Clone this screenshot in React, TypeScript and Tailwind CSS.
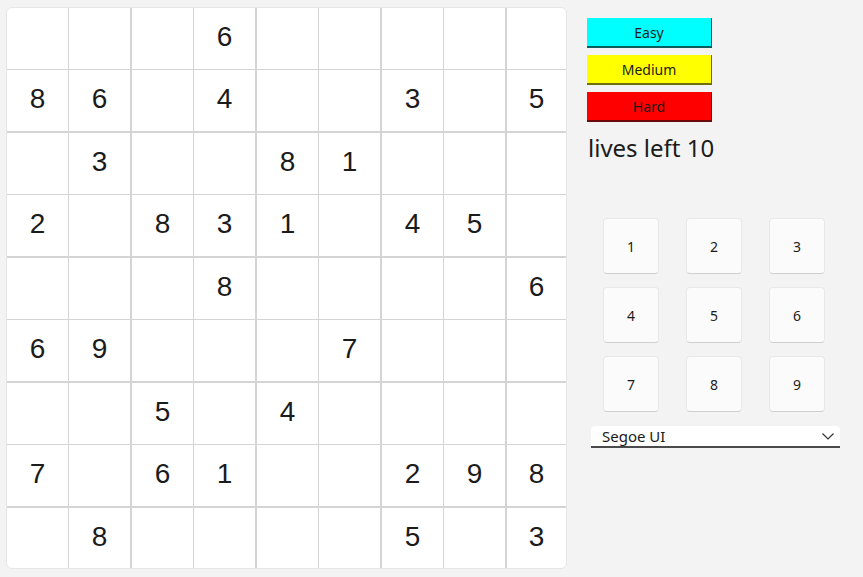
import React from "react";

const board: number[][] = [
  [0, 0, 0, 6, 0, 0, 0, 0, 0],
  [8, 6, 0, 4, 0, 0, 3, 0, 5],
  [0, 3, 0, 0, 8, 1, 0, 0, 0],
  [2, 0, 8, 3, 1, 0, 4, 5, 0],
  [0, 0, 0, 8, 0, 0, 0, 0, 6],
  [6, 9, 0, 0, 0, 7, 0, 0, 0],
  [0, 0, 5, 0, 4, 0, 0, 0, 0],
  [7, 0, 6, 1, 0, 0, 2, 9, 8],
  [0, 8, 0, 0, 0, 0, 5, 0, 3],
];

// lines after odd cells are 1px, after even cells 2px, last cell has none
const rightBorder = (c: number) =>
  c === 8 ? "" : c % 2 === 0 ? "border-r" : "border-r-2";
const bottomBorder = (r: number) =>
  r === 8 ? "" : r % 2 === 0 ? "border-b" : "border-b-2";

const Cell = ({ value, r, c }: { value: number; r: number; c: number }) => (
  <div
    className={`flex items-center justify-center border-[#d4d4d4] ${rightBorder(c)} ${bottomBorder(r)}`}
  >
    <span className="-mt-[3px] text-[28px] leading-none text-[#1b1b1b] font-['Liberation_Sans',Arial,sans-serif]">
      {value ? value : ""}
    </span>
  </div>
);

const LevelButton = ({
  label,
  className,
}: {
  label: string;
  className: string;
}) => (
  <button
    className={`h-[30px] w-[125px] border-r border-b-2 text-[14px] text-[#1b1b1b] ${className}`}
  >
    {label}
  </button>
);

const PadButton = ({ n }: { n: number }) => (
  <button className="flex h-[56px] w-[56px] items-center justify-center rounded-[4px] border border-[#e8e8e8] border-b-[#cfcfcf] bg-[#fbfbfb] text-[14px] text-[#1b1b1b]">
    {n}
  </button>
);

export default function App() {
  return (
    <div className="flex h-[577px] w-[863px] bg-[#f3f3f3] font-['Segoe_UI','Noto_Sans',sans-serif]">
      <div className="pl-[6px] pt-[7px]">
        <div className="overflow-hidden rounded-[6px] border border-[#e6e6e6] bg-white">
          <div className="grid grid-cols-[62px_63px_62px_63px_62px_63px_62px_63px_59px] grid-rows-[62px_63px_62px_63px_62px_63px_62px_63px_60px]">
            {board.map((row, r) =>
              row.map((v, c) => <Cell key={`${r}-${c}`} value={v} r={r} c={c} />)
            )}
          </div>
        </div>
      </div>

      <div className="ml-[20px] flex flex-col pt-[18px]">
        <div className="flex flex-col gap-[7px]">
          <LevelButton label="Easy" className="bg-[#00ffff] border-[#0b5c5c]" />
          <LevelButton label="Medium" className="bg-[#ffff00] border-[#6e6e0a]" />
          <LevelButton label="Hard" className="bg-[#ff0000] border-[#6a0a0a]" />
        </div>
        <div className="mt-[10px] ml-px text-[24px] leading-[32px] text-[#1b1b1b]">
          lives left 10
        </div>

        <div className="ml-[16px] mt-[54px] grid grid-cols-[56px_56px_56px] gap-x-[27px] gap-y-[13px]">
          {[1, 2, 3, 4, 5, 6, 7, 8, 9].map((n) => (
            <PadButton key={n} n={n} />
          ))}
        </div>

        <div className="ml-[4px] mt-[14px] flex h-[22px] w-[249px] items-center justify-between rounded-t-[4px] border-b-2 border-[#4a4a4a] bg-white pl-[11px] pr-[5px]">
          <span className="text-[15px] leading-none text-[#1b1b1b]">Segoe UI</span>
          <svg width="14" height="10" viewBox="0 0 14 10" fill="none">
            <polyline
              points="1.5,2.5 7,8 12.5,2.5"
              stroke="#333"
              strokeWidth="1.2"
            />
          </svg>
        </div>
      </div>
    </div>
  );
}
